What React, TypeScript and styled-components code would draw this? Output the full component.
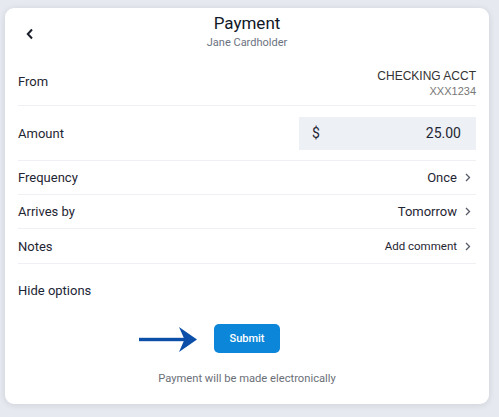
import * as React from "react";
import styled, { createGlobalStyle } from "styled-components";

const GlobalStyle = createGlobalStyle`
  html, body {
    margin: 0;
    padding: 0;
    background: #e6e9ef;
    font-family: Roboto, "Liberation Sans", Arial, sans-serif;
  }
`;

const Page = styled.div`
  padding: 8px 10px 13px 5px;
`;

const Card = styled.div`
  background: #ffffff;
  border-radius: 9px;
  box-shadow: 0 1px 6px rgba(30, 40, 60, 0.12);
  padding: 0 13px;
  height: 396px;
  box-sizing: border-box;
  display: flex;
  flex-direction: column;
`;

const Header = styled.div`
  display: grid;
  grid-template-columns: 40px 1fr 40px;
  padding-top: 5px;
  height: 50px;
  box-sizing: border-box;
`;

const BackButton = styled.button`
  border: none;
  background: none;
  padding: 0;
  margin: 14px 0 0 7px;
  width: 12px;
  height: 14px;
  align-self: start;
  color: #1a1f2b;
  cursor: pointer;
`;

const TitleBlock = styled.div`
  display: flex;
  flex-direction: column;
  align-items: center;
`;

const Title = styled.div`
  font-size: 17px;
  line-height: 20px;
  color: #111827;
`;

const Subtitle = styled.div`
  font-size: 11px;
  line-height: 14px;
  margin-top: 3px;
  color: #6b7280;
`;

const Row = styled.div<{ $h: number }>`
  display: flex;
  align-items: center;
  justify-content: space-between;
  height: ${(p) => p.$h}px;
  border-bottom: 1px solid #eef0f3;
  box-sizing: border-box;
`;

const Label = styled.div`
  font-size: 13px;
  color: #1f2633;
`;

const Account = styled.div`
  display: flex;
  flex-direction: column;
  align-items: flex-end;
  padding-top: 4px;
`;

const AccountName = styled.div`
  font-size: 12px;
  line-height: 15px;
  color: #333;
  font-family: "Liberation Sans", Arial, sans-serif;
`;

const AccountNum = styled.div`
  font-size: 11px;
  line-height: 15px;
  color: #777;
  font-family: "Liberation Sans", Arial, sans-serif;
`;

const AmountBox = styled.div`
  width: 177px;
  height: 33px;
  background: #edf0f5;
  display: flex;
  align-items: center;
  justify-content: space-between;
  padding: 0 15px 0 13px;
  box-sizing: border-box;
  font-size: 14px;
  color: #1f2633;
`;

const Value = styled.div<{ $small?: boolean }>`
  display: flex;
  align-items: center;
  gap: 8px;
  font-size: ${(p) => (p.$small ? 11.5 : 13)}px;
  color: #1f2633;
`;

const Chevron = styled.svg`
  width: 6px;
  height: 9px;
  margin-right: 5px;
  color: #555b66;
`;

const HideLink = styled.div`
  font-size: 13px;
  color: #1c2636;
  height: 53px;
  display: flex;
  align-items: center;
`;

const SubmitArea = styled.div`
  position: relative;
  display: flex;
  justify-content: center;
  margin-top: 7px;
`;

const Pointer = styled.svg`
  position: absolute;
  left: 121px;
  top: 3px;
`;

const SubmitButton = styled.button`
  width: 66px;
  height: 29px;
  border: none;
  border-radius: 5px;
  background: #0b86d8;
  color: #ffffff;
  font-family: Roboto, "Liberation Sans", Arial, sans-serif;
  font-size: 11px;
  font-weight: 500;
  cursor: pointer;
`;

const Footnote = styled.div`
  text-align: center;
  font-size: 11.2px;
  color: #6b6f78;
  margin-top: 19px;
`;

const RightChevron = () => (
  <Chevron viewBox="0 0 6 9">
    <path d="M1 1l3.5 3.5L1 8" fill="none" stroke="currentColor" strokeWidth="1.3" />
  </Chevron>
);

export default function App() {
  return (
    <Page>
      <GlobalStyle />
      <Card>
        <Header>
          <BackButton aria-label="Back">
            <svg width="12" height="14" viewBox="0 0 12 14">
              <path d="M7 2.5L2.8 7L7 11.5" fill="none" stroke="currentColor" strokeWidth="2" />
            </svg>
          </BackButton>
          <TitleBlock>
            <Title>Payment</Title>
            <Subtitle>Jane Cardholder</Subtitle>
          </TitleBlock>
          <div />
        </Header>

        <Row $h={48}>
          <Label>From</Label>
          <Account>
            <AccountName>CHECKING ACCT</AccountName>
            <AccountNum>XXX1234</AccountNum>
          </Account>
        </Row>

        <Row $h={55}>
          <Label>Amount</Label>
          <AmountBox>
            <span>$</span>
            <span>25.00</span>
          </AmountBox>
        </Row>

        <Row $h={34}>
          <Label>Frequency</Label>
          <Value>
            Once
            <RightChevron />
          </Value>
        </Row>

        <Row $h={34}>
          <Label>Arrives by</Label>
          <Value>
            Tomorrow
            <RightChevron />
          </Value>
        </Row>

        <Row $h={35}>
          <Label>Notes</Label>
          <Value $small>
            Add comment
            <RightChevron />
          </Value>
        </Row>

        <HideLink>Hide options</HideLink>

        <SubmitArea>
          <Pointer width="58" height="25" viewBox="0 0 58 25">
            <rect x="0" y="10.8" width="48" height="3.4" fill="#0b4fa8" />
            <path d="M58 12.5L40 0L45.5 12.5L40 25Z" fill="#0b4fa8" />
          </Pointer>
          <SubmitButton>Submit</SubmitButton>
        </SubmitArea>

        <Footnote>Payment will be made electronically</Footnote>
      </Card>
    </Page>
  );
}
